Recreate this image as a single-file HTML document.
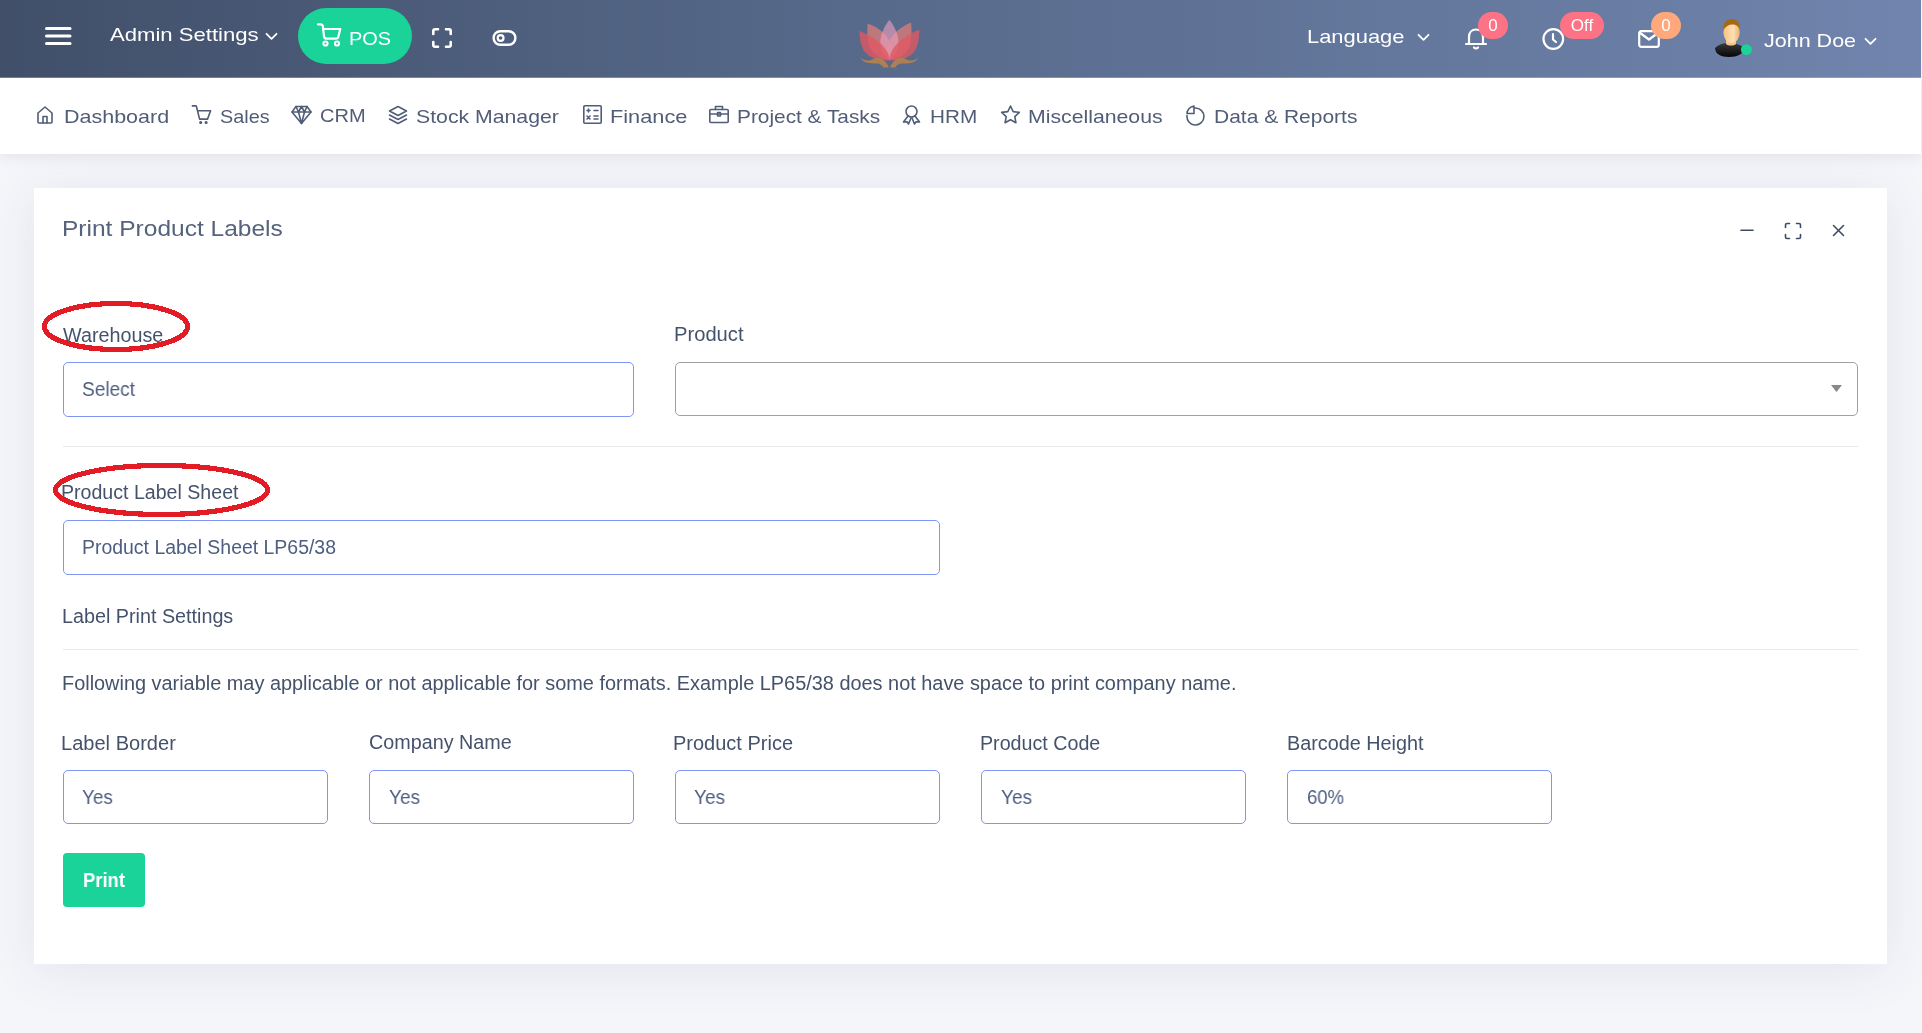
<!DOCTYPE html>
<html><head><meta charset="utf-8"><style>
html,body{margin:0;padding:0}
body{width:1922px;height:1033px;overflow:hidden;position:relative;background:#f5f6fa;font-family:"Liberation Sans",sans-serif}
.t{position:absolute;white-space:nowrap;will-change:transform}
.ab{position:absolute;display:block}
#hdr{position:absolute;z-index:0;left:0;top:0;width:1921px;height:78px;box-shadow:inset 0 -1px 0 rgba(200,210,235,0.35);background:linear-gradient(90deg,#414f69 0%,#576a8b 45%,#7084ad 100%)}
#nav{position:absolute;z-index:-1;left:0;top:78px;width:1921px;height:76px;background:#fff;box-shadow:0 2px 14px rgba(40,50,90,0.10)}
#card{position:absolute;left:34px;top:188px;width:1853px;height:776px;background:#fff;box-shadow:0 6px 50px rgba(40,50,90,0.09)}
.inp{position:absolute;box-sizing:border-box;border:1px solid #7f96f2;border-radius:5px;background:#fff}
.inp.sel{border-color:#a0a0a0}
.hr{position:absolute;left:63px;width:1795px;height:1px;background:#e8e8ec}
.badge{position:absolute;will-change:transform;height:27px;border-radius:13.5px;color:#fff;font-size:17px;line-height:27px;text-align:center}
</style></head><body>
<div id="hdr"></div>
<svg class="ab" style="left:43px;top:25px" width="30" height="22" viewBox="0 0 30 22"><g stroke="#fff" stroke-width="3" stroke-linecap="round"><line x1="3.5" y1="3.5" x2="27" y2="3.5"/><line x1="3.5" y1="11" x2="27" y2="11"/><line x1="3.5" y1="18.5" x2="27" y2="18.5"/></g></svg>
<div class="t" style="left:109.6px;top:26px;font-size:18.6px;line-height:18.6px;color:#fff;font-weight:400;transform:scaleX(1.1884);transform-origin:0 0;">Admin Settings</div>
<svg class="ab" style="left:265px;top:32px" width="13" height="9" viewBox="0 0 13 9"><path d="M1.5 1.8 L6.5 6.8 L11.5 1.8" fill="none" stroke="#fff" stroke-width="1.8" stroke-linecap="round" stroke-linejoin="round"/></svg>
<div class="ab" style="left:298px;top:8px;width:114px;height:56px;border-radius:28px;background:#1ad398"></div>
<svg class="ab" style="left:316px;top:22px" width="27" height="26" viewBox="0 0 27 26"><g fill="none" stroke="#fff" stroke-width="2.2" stroke-linecap="round" stroke-linejoin="round"><path d="M1.9 2.3 H4.6 Q6.6 2.3 6.9 4.3 L8 14.3 Q8.3 16.7 10.7 16.7 H19.8 Q22 16.7 22.4 14.6 L24.3 7 H6.9"/></g><circle cx="9.5" cy="21.5" r="2.1" fill="none" stroke="#fff" stroke-width="2"/><circle cx="21" cy="21.5" r="2.1" fill="none" stroke="#fff" stroke-width="2"/></svg>
<div class="t" style="left:349.4px;top:30px;font-size:18.2px;line-height:18.2px;color:#fff;font-weight:400;transform:scaleX(1.0947);transform-origin:0 0;">POS</div>
<svg class="ab" style="left:431px;top:27px" width="22" height="22" viewBox="0 0 22 22"><g fill="none" stroke="#fff" stroke-width="2.6" stroke-linecap="round" stroke-linejoin="round"><path d="M2.3 7 V4 Q2.3 2.3 4 2.3 H7"/><path d="M15 2.3 H18 Q19.7 2.3 19.7 4 V7"/><path d="M19.7 15 V18 Q19.7 19.7 18 19.7 H15"/><path d="M7 19.7 H4 Q2.3 19.7 2.3 18 V15"/></g></svg>
<svg class="ab" style="left:491px;top:29px" width="27" height="18" viewBox="0 0 27 18"><rect x="2.6" y="2.2" width="21.8" height="13.6" rx="6.8" fill="none" stroke="#fff" stroke-width="2.4"/><circle cx="9.6" cy="9" r="2.9" fill="none" stroke="#fff" stroke-width="2.2"/></svg>
<svg class="ab" style="left:855px;top:16px" width="70" height="56" viewBox="0 0 70 56">
<path d="M12.7 7.5 C22 11 31 17 35 26 C38 33 37.5 40 34.4 44 C26 43 18 39 14.5 31 C12 25 12 15 12.7 7.5Z" fill="#c97a7c" opacity="0.9"/>
<path d="M56.1 6.6 C46.8 10.6 37.8 17 33.8 26 C30.8 33 31.3 40 34.4 44 C42.8 43 50.8 39 54.3 31 C56.8 25 56.8 15 56.1 6.6Z" fill="#c97a7c" opacity="0.9"/>
<path d="M34.4 3.7 C40 11 43.5 19 43.5 27 C43.5 35 39 40 34.4 44 C29.8 40 25.3 35 25.3 27 C25.3 19 28.8 11 34.4 3.7Z" fill="#f0a0c0" opacity="0.6"/>
<path d="M4.5 15.1 C15 19 26.5 26.5 31.5 34.5 C34 38.5 34.6 42 34.4 44.5 C24 45 14.5 42 9.5 35.5 C5.5 30 4.5 22 4.5 15.1Z" fill="#e25762" opacity="0.78"/>
<path d="M64.3 13.5 C53.8 17.5 42.3 25.5 37.3 34 C34.8 38.5 34.2 42 34.4 44.5 C44.8 45 54.3 42 59.3 35.5 C63.3 30 64.3 21 64.3 13.5Z" fill="#e25762" opacity="0.78"/>
<path d="M5.1 40.3 C6.5 43.5 10 44.8 14 44.6 C17 44.4 19 42.3 21.5 41.8 C25.5 41.3 28.5 43.5 30.8 46.3 C32.3 48.3 33.6 50 33.6 51.6 L28.4 51.6 C27.2 49 25.2 47.5 21.5 47.4 C16 47.3 8 48.5 5.1 40.3Z" fill="#ad7f52"/>
<path d="M 63.7 40.3 C 62.3 43.5 58.8 44.8 54.8 44.6 C 51.8 44.4 49.8 42.3 47.3 41.8 C 43.3 41.3 40.3 43.5 38.0 46.3 C 36.5 48.3 35.2 50.0 35.2 51.6 L 40.4 51.6 C 41.6 49.0 43.6 47.5 47.3 47.4 C 52.8 47.3 60.8 48.5 63.7 40.3 Z" fill="#ad7f52"/>
</svg>
<div class="t" style="left:1306.6px;top:28px;font-size:18.6px;line-height:18.6px;color:#fff;font-weight:400;transform:scaleX(1.1776);transform-origin:0 0;">Language</div>
<svg class="ab" style="left:1417px;top:33px" width="13" height="9" viewBox="0 0 13 9"><path d="M1.5 1.8 L6.5 6.8 L11.5 1.8" fill="none" stroke="#fff" stroke-width="1.8" stroke-linecap="round" stroke-linejoin="round"/></svg>
<svg class="ab" style="left:1463px;top:26px" width="26" height="26" viewBox="0 0 26 26"><g fill="none" stroke="#fff" stroke-width="2.2" stroke-linecap="round" stroke-linejoin="round"><path d="M6 17 V11 C6 6.5 9 3.5 13 3.5 C17 3.5 20 6.5 20 11 V17"/><path d="M3 18 H23"/><path d="M11 21.5 Q13 23.5 15 21.5"/></g></svg>
<div class="badge" style="left:1478px;top:12px;width:30px;background:#fe7285">0</div>
<svg class="ab" style="left:1541px;top:27px" width="25" height="24" viewBox="0 0 25 24"><circle cx="12.3" cy="12" r="9.8" fill="none" stroke="#fff" stroke-width="2.2"/><path d="M12 7 V12.5 L15 15" fill="none" stroke="#fff" stroke-width="2.2" stroke-linecap="round" stroke-linejoin="round"/></svg>
<div class="badge" style="left:1560px;top:12px;width:44px;background:#fe7285">Off</div>
<svg class="ab" style="left:1637px;top:29px" width="24" height="20" viewBox="0 0 24 20"><rect x="2.2" y="2.2" width="19.6" height="15.6" rx="2" fill="none" stroke="#fff" stroke-width="2.2"/><path d="M2.5 3.5 L12 10.5 L21.5 3.5" fill="none" stroke="#fff" stroke-width="2.2" stroke-linejoin="round"/></svg>
<div class="badge" style="left:1651px;top:12px;width:30px;background:#fea87b">0</div>
<svg class="ab" style="left:1713px;top:17px" width="42" height="42" viewBox="0 0 42 42">
<defs><linearGradient id="sk" x1="0" y1="0" x2="1" y2="0"><stop offset="0" stop-color="#f5c27e"/><stop offset="0.6" stop-color="#fde0b5"/><stop offset="1" stop-color="#eab070"/></linearGradient>
<linearGradient id="sh" x1="0" y1="0" x2="0" y2="1"><stop offset="0" stop-color="#3a3a3a"/><stop offset="1" stop-color="#050505"/></linearGradient></defs>
<path d="M2 31 C6 27 11 26 16 26 C21 26 27 27 31 31 C31 37 24 40 16 40 C8 40 2 37 2 31Z" fill="url(#sh)"/>
<path d="M13 22 L13 27 C15 29 21 29 23 27 L23 22Z" fill="#f3c58a"/>
<ellipse cx="18.6" cy="15.2" rx="8.2" ry="11" fill="url(#sk)"/>
<path d="M10.4 13 C9.8 6 13 2 18.6 2 C24.2 2 27.6 6 26.8 13 C25.5 9 23 7.5 19.5 7.5 C15.5 7.5 12.5 9.5 10.4 13Z" fill="#a7690f"/>
<circle cx="33.4" cy="32.7" r="5.5" fill="#1ad398"/>
</svg>
<div class="t" style="left:1764.2px;top:32px;font-size:18.6px;line-height:18.6px;color:#fff;font-weight:400;transform:scaleX(1.1568);transform-origin:0 0;">John Doe</div>
<svg class="ab" style="left:1864px;top:37px" width="13" height="9" viewBox="0 0 13 9"><path d="M1.5 1.8 L6.5 6.8 L11.5 1.8" fill="none" stroke="#fff" stroke-width="1.8" stroke-linecap="round" stroke-linejoin="round"/></svg>
<div id="nav"></div>
<svg class="ab" style="left:35px;top:104px" width="20" height="21" viewBox="0 0 20 21"><g fill="none" stroke="#515d77" stroke-width="1.6" stroke-linecap="round" stroke-linejoin="round"><path d="M3 9 L10 3 L17 9 V18 Q17 19 16 19 H4 Q3 19 3 18Z"/><path d="M8 19 V12.5 H12 V19"/></g></svg>
<div class="t" style="left:64.0px;top:108px;font-size:18.6px;line-height:18.6px;color:#515d77;font-weight:400;transform:scaleX(1.1556);transform-origin:0 0;">Dashboard</div>
<svg class="ab" style="left:190px;top:103px" width="23" height="23" viewBox="0 0 23 23"><g fill="none" stroke="#515d77" stroke-width="1.6" stroke-linecap="round" stroke-linejoin="round"><path d="M2.4 2.9 H5.6 Q6.3 2.9 6.5 3.7 L9.6 16.1 H17.5 L20.6 7.7 H7.6"/><circle cx="10.7" cy="19.5" r="0.8" fill="#515d77"/><circle cx="16.1" cy="19.5" r="0.8" fill="#515d77"/></g></svg>
<div class="t" style="left:220.0px;top:108px;font-size:18.6px;line-height:18.6px;color:#515d77;font-weight:400;transform:scaleX(1.0665);transform-origin:0 0;">Sales</div>
<svg class="ab" style="left:290px;top:103px" width="23" height="23" viewBox="0 0 23 23"><g fill="none" stroke="#515d77" stroke-width="1.6" stroke-linecap="round" stroke-linejoin="round"><path d="M6 3.5 H17 L21 9 L11.5 20.5 L2 9Z"/><path d="M2 9 H21"/><path d="M6 3.5 L8.5 9 L11.5 3.5 L14.5 9 L17 3.5"/><path d="M8.5 9 L11.5 20.5 L14.5 9"/></g></svg>
<div class="t" style="left:319.6px;top:107px;font-size:18.6px;line-height:18.6px;color:#515d77;font-weight:400;transform:scaleX(1.0763);transform-origin:0 0;">CRM</div>
<svg class="ab" style="left:387px;top:104px" width="22" height="21" viewBox="0 0 22 21"><g fill="none" stroke="#515d77" stroke-width="1.6" stroke-linecap="round" stroke-linejoin="round"><path d="M11 2.5 L19.5 7 L11 11.5 L2.5 7Z"/><path d="M2.5 11 L11 15.5 L19.5 11"/><path d="M2.5 15 L11 19.5 L19.5 15"/></g></svg>
<div class="t" style="left:416.2px;top:108px;font-size:18.6px;line-height:18.6px;color:#515d77;font-weight:400;transform:scaleX(1.1424);transform-origin:0 0;">Stock Manager</div>
<svg class="ab" style="left:581px;top:103px" width="23" height="23" viewBox="0 0 23 23"><g fill="none" stroke="#515d77" stroke-width="1.6" stroke-linecap="round" stroke-linejoin="round"><rect x="2.8" y="2.8" width="17.4" height="17.4" rx="1"/><path d="M6 7.5 H9 M7.5 6 V9 M13 7.5 H17 M6 13 L9 16 M9 13 L6 16 M13 13 H17 M13 16 H17"/></g></svg>
<div class="t" style="left:610.0px;top:108px;font-size:18.6px;line-height:18.6px;color:#515d77;font-weight:400;transform:scaleX(1.1695);transform-origin:0 0;">Finance</div>
<svg class="ab" style="left:707px;top:103px" width="24" height="22" viewBox="0 0 24 22"><g fill="none" stroke="#515d77" stroke-width="1.6" stroke-linecap="round" stroke-linejoin="round"><rect x="2.8" y="6.5" width="18.4" height="13" rx="1"/><path d="M8.5 6.5 V3.5 H15.5 V6.5"/><path d="M2.8 11 H21.2"/><rect x="10.5" y="9.5" width="3" height="3.5" rx="0.5"/></g></svg>
<div class="t" style="left:737.0px;top:108px;font-size:18.6px;line-height:18.6px;color:#515d77;font-weight:400;transform:scaleX(1.1204);transform-origin:0 0;">Project &amp; Tasks</div>
<svg class="ab" style="left:900px;top:103px" width="23" height="23" viewBox="0 0 23 23"><g fill="none" stroke="#515d77" stroke-width="1.6" stroke-linecap="round" stroke-linejoin="round"><circle cx="11.5" cy="8.5" r="5.5"/><path d="M8 13 L3.5 19 L7 18.8 L8.5 21 L11 15"/><path d="M15 13 L19.5 19 L16 18.8 L14.5 21 L12 15"/></g></svg>
<div class="t" style="left:930.0px;top:108px;font-size:18.6px;line-height:18.6px;color:#515d77;font-weight:400;transform:scaleX(1.1148);transform-origin:0 0;">HRM</div>
<svg class="ab" style="left:999px;top:103px" width="23" height="23" viewBox="0 0 23 23"><g fill="none" stroke="#515d77" stroke-width="1.6" stroke-linecap="round" stroke-linejoin="round"><path d="M11.5 3 L14.2 8.6 L20.3 9.4 L15.8 13.6 L16.9 19.7 L11.5 16.8 L6.1 19.7 L7.2 13.6 L2.7 9.4 L8.8 8.6Z"/></g></svg>
<div class="t" style="left:1028.2px;top:108px;font-size:18.6px;line-height:18.6px;color:#515d77;font-weight:400;transform:scaleX(1.1427);transform-origin:0 0;">Miscellaneous</div>
<svg class="ab" style="left:1184px;top:103px" width="23" height="23" viewBox="0 0 23 23"><g fill="none" stroke="#515d77" stroke-width="1.6" stroke-linecap="round" stroke-linejoin="round"><path d="M11 5 A8.5 8.5 0 1 1 3 12.5"/><path d="M3 10.5 A8 8 0 0 1 10 3 V10.5Z"/></g></svg>
<div class="t" style="left:1214.2px;top:108px;font-size:18.6px;line-height:18.6px;color:#515d77;font-weight:400;transform:scaleX(1.128);transform-origin:0 0;">Data &amp; Reports</div>
<div id="card"></div>
<div class="t" style="left:62.2px;top:218px;font-size:22.4px;line-height:22.4px;color:#56637c;font-weight:400;transform:scaleX(1.095);transform-origin:0 0;">Print Product Labels</div>
<svg class="ab" style="left:1738px;top:218px" width="112" height="24" viewBox="0 0 112 24"><g fill="none" stroke="#3e4b65" stroke-width="1.6" stroke-linecap="round" stroke-linejoin="round"><path d="M3 12.3 H15"/><path d="M47.5 9.5 V7 Q47.5 5.5 49 5.5 H51.5 M58.5 5.5 H61 Q62.5 5.5 62.5 7 V9.5 M62.5 16.5 V19 Q62.5 20.5 61 20.5 H58.5 M51.5 20.5 H49 Q47.5 20.5 47.5 19 V16.5"/><path d="M95.5 7.5 L105.5 17.5 M105.5 7.5 L95.5 17.5"/></g></svg>
<div class="t" style="left:63.2px;top:326px;font-size:19.4px;line-height:19.4px;color:#45526c;font-weight:400;transform:scaleX(1.0196);transform-origin:0 0;">Warehouse</div>
<div class="inp" style="left:63px;top:362px;width:571px;height:55px"></div>
<div class="t" style="left:82.0px;top:380px;font-size:19.4px;line-height:19.4px;color:#4d5e80;font-weight:400;transform:scaleX(0.9833);transform-origin:0 0;">Select</div>
<div class="t" style="left:674.0px;top:325px;font-size:19.4px;line-height:19.4px;color:#45526c;font-weight:400;transform:scaleX(1.04);transform-origin:0 0;">Product</div>
<div class="inp sel" style="left:675px;top:362px;width:1183px;height:54px"></div>
<svg class="ab" style="left:1831px;top:385px" width="12" height="8" viewBox="0 0 12 8"><path d="M0 0 H11 L5.5 7Z" fill="#888"/></svg>
<div class="hr" style="top:446px"></div>
<div class="t" style="left:60.8px;top:483px;font-size:19.4px;line-height:19.4px;color:#45526c;font-weight:400;transform:scaleX(1.0101);transform-origin:0 0;">Product Label Sheet</div>
<div class="inp" style="left:63px;top:520px;width:877px;height:55px"></div>
<div class="t" style="left:82.2px;top:538px;font-size:19.4px;line-height:19.4px;color:#4d5e80;font-weight:400;transform:scaleX(1.0025);transform-origin:0 0;">Product Label Sheet LP65/38</div>
<div class="t" style="left:61.8px;top:607px;font-size:19.4px;line-height:19.4px;color:#45526c;font-weight:400;transform:scaleX(1.0183);transform-origin:0 0;">Label Print Settings</div>
<div class="hr" style="top:649px"></div>
<div class="t" style="left:61.8px;top:674px;font-size:19.4px;line-height:19.4px;color:#45526c;font-weight:400;transform:scaleX(1.026);transform-origin:0 0;">Following variable may applicable or not applicable for some formats. Example LP65/38 does not have space to print company name.</div>
<div class="t" style="left:60.8px;top:734px;font-size:19.4px;line-height:19.4px;color:#45526c;font-weight:400;transform:scaleX(1.0344);transform-origin:0 0;">Label Border</div>
<div class="inp" style="left:63px;top:770px;width:265px;height:54px"></div>
<div class="t" style="left:82.2px;top:788px;font-size:19.4px;line-height:19.4px;color:#4d5e80;font-weight:400;transform:scaleX(0.9729);transform-origin:0 0;">Yes</div>
<div class="t" style="left:368.6px;top:733px;font-size:19.4px;line-height:19.4px;color:#45526c;font-weight:400;transform:scaleX(1.0183);transform-origin:0 0;">Company Name</div>
<div class="inp" style="left:369px;top:770px;width:265px;height:54px"></div>
<div class="t" style="left:388.8px;top:788px;font-size:19.4px;line-height:19.4px;color:#4d5e80;font-weight:400;transform:scaleX(0.9797);transform-origin:0 0;">Yes</div>
<div class="t" style="left:673.4px;top:734px;font-size:19.4px;line-height:19.4px;color:#45526c;font-weight:400;transform:scaleX(1.0312);transform-origin:0 0;">Product Price</div>
<div class="inp" style="left:675px;top:770px;width:265px;height:54px"></div>
<div class="t" style="left:693.9px;top:788px;font-size:19.4px;line-height:19.4px;color:#4d5e80;font-weight:400;transform:scaleX(0.9797);transform-origin:0 0;">Yes</div>
<div class="t" style="left:980.2px;top:734px;font-size:19.4px;line-height:19.4px;color:#45526c;font-weight:400;transform:scaleX(1.0142);transform-origin:0 0;">Product Code</div>
<div class="inp" style="left:981px;top:770px;width:265px;height:54px"></div>
<div class="t" style="left:1000.6px;top:788px;font-size:19.4px;line-height:19.4px;color:#4d5e80;font-weight:400;transform:scaleX(0.9797);transform-origin:0 0;">Yes</div>
<div class="t" style="left:1286.6px;top:734px;font-size:19.4px;line-height:19.4px;color:#45526c;font-weight:400;transform:scaleX(1.0204);transform-origin:0 0;">Barcode Height</div>
<div class="inp" style="left:1287px;top:770px;width:265px;height:54px"></div>
<div class="t" style="left:1306.8px;top:788px;font-size:19.4px;line-height:19.4px;color:#4d5e80;font-weight:400;transform:scaleX(0.9549);transform-origin:0 0;">60%</div>
<div class="ab" style="left:63px;top:853px;width:82px;height:54px;border-radius:4px;background:#1ad398"></div>
<div class="t" style="left:82.6px;top:871px;font-size:19.4px;line-height:19.4px;color:#fff;font-weight:700;transform:scaleX(0.9491);transform-origin:0 0;">Print</div>
<svg class="ab" style="left:0;top:0" width="1922" height="1033" viewBox="0 0 1922 1033"><g fill="none" stroke="#e31b24" stroke-width="5.2" shape-rendering="crispEdges"><ellipse cx="116" cy="326.5" rx="71.5" ry="23"/><ellipse cx="161.5" cy="490" rx="106" ry="24.5"/></g></svg>
</body></html>
